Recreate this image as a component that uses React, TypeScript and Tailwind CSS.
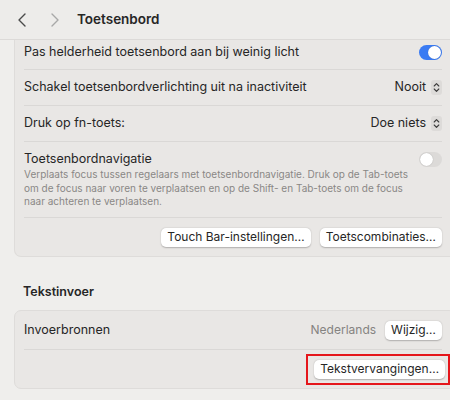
import React from "react";

function Toggle({ on }: { on: boolean }) {
  return (
    <div
      className={`relative w-[23px] h-[15px] rounded-full ${on ? "bg-[#3a7bf3]" : "bg-[#dcdad8]"}`}
    >
      <div
        className={`absolute top-[1px] w-[13px] h-[13px] rounded-full bg-white shadow-[0_0_1px_rgba(0,0,0,0.3)] ${on ? "right-[1px]" : "left-[1px]"}`}
      />
    </div>
  );
}

function Stepper() {
  return (
    <div className="w-[11px] h-[15px] rounded-[3px] bg-[#dddbd9] flex items-center justify-center">
      <svg width="7" height="11" viewBox="0 0 7 11" fill="none" stroke="#3a3a3a" strokeWidth="1.1" strokeLinecap="round" strokeLinejoin="round">
        <path d="M1.2 4 L3.5 1.6 L5.8 4" />
        <path d="M1.2 7 L3.5 9.4 L5.8 7" />
      </svg>
    </div>
  );
}

function Btn({ children, className = "" }: { children: React.ReactNode; className?: string }) {
  return (
    <div
      className={`h-[19px] px-[6px] flex items-center rounded-[5px] bg-white text-[12px] text-[#262626] whitespace-nowrap shadow-[0_0.5px_1.5px_rgba(0,0,0,0.25)] ${className}`}
    >
      {children}
    </div>
  );
}

export default function App() {
  return (
    <div
      className="w-[450px] h-[400px] overflow-hidden bg-[#efeeec] text-[#262626]"
      style={{ fontFamily: "Inter, 'Liberation Sans', sans-serif" }}
    >
      {/* Header */}
      <div className="h-[40px] flex items-center border-b border-[#dcdad8] bg-[#edecea]">
        <svg className="ml-[17px]" width="10" height="16" viewBox="0 0 10 16" fill="none" stroke="#4a4a4a" strokeWidth="1.4" strokeLinecap="round" strokeLinejoin="round">
          <path d="M8 2 L2 8 L8 14" />
        </svg>
        <svg className="ml-[23px]" width="10" height="16" viewBox="0 0 10 16" fill="none" stroke="#a8a8a8" strokeWidth="1.4" strokeLinecap="round" strokeLinejoin="round">
          <path d="M2 2 L8 8 L2 14" />
        </svg>
        <div className="ml-[17px] text-[13.5px] font-semibold text-[#262626]">Toetsenbord</div>
      </div>

      {/* Card 1 */}
      <div className="ml-[14px] mr-[-6px] bg-[#e9e7e5] border border-t-0 border-[#dedcda] rounded-b-[7px] pl-[9px] pr-[13px] text-[12.5px]">
        <div className="h-[30px] pb-[5px] flex items-center justify-between border-b border-[#dad8d6]">
          <span>Pas helderheid toetsenbord aan bij weinig licht</span>
          <Toggle on />
        </div>
        <div className="h-[36px] flex items-center justify-between border-b border-[#dad8d6]">
          <span>Schakel toetsenbordverlichting uit na inactiviteit</span>
          <div className="flex items-center gap-[5px]">
            <span>Nooit</span>
            <Stepper />
          </div>
        </div>
        <div className="h-[36px] flex items-center justify-between border-b border-[#dad8d6]">
          <span>Druk op fn-toets:</span>
          <div className="flex items-center gap-[5px]">
            <span>Doe niets</span>
            <Stepper />
          </div>
        </div>
        <div className="h-[76px] pt-[9px] flex justify-between border-b border-[#dad8d6]">
          <div>
            <div className="leading-[16px]">Toetsenbordnavigatie</div>
            <div className="text-[10px] leading-[13.5px] text-[#8a8886] mt-[1px] whitespace-nowrap">
              <div>Verplaats focus tussen regelaars met toetsenbordnavigatie. Druk op de Tab-toets</div>
              <div>om de focus naar voren te verplaatsen en op de Shift- en Tab-toets om de focus</div>
              <div>naar achteren te verplaatsen.</div>
            </div>
          </div>
          <div className="pt-[1px]">
            <Toggle on={false} />
          </div>
        </div>
        <div className="h-[38px] flex items-center justify-end gap-[9px]">
          <Btn>Touch Bar-instellingen…</Btn>
          <Btn>Toetscombinaties…</Btn>
        </div>
      </div>

      {/* Heading */}
      <div className="mt-[27px] ml-[23px] text-[12.5px] font-semibold leading-[16px]">Tekstinvoer</div>

      {/* Card 2 */}
      <div className="mt-[10px] ml-[14px] mr-[-6px] bg-[#e9e7e5] border border-[#dedcda] rounded-[7px] pl-[9px] pr-[13px] text-[12.5px]">
        <div className="h-[39px] flex items-center justify-between border-b border-[#dad8d6]">
          <span>Invoerbronnen</span>
          <div className="flex items-center gap-[9px]">
            <span className="text-[#858381] text-[12px]">Nederlands</span>
            <Btn>Wijzig…</Btn>
          </div>
        </div>
        <div className="h-[38px] flex items-center justify-end">
          <div className="border-2 border-[#e5161b] py-[4px] pl-[6px] mr-[-8px] pr-[3px]">
            <Btn>Tekstvervangingen…</Btn>
          </div>
        </div>
      </div>
    </div>
  );
}
